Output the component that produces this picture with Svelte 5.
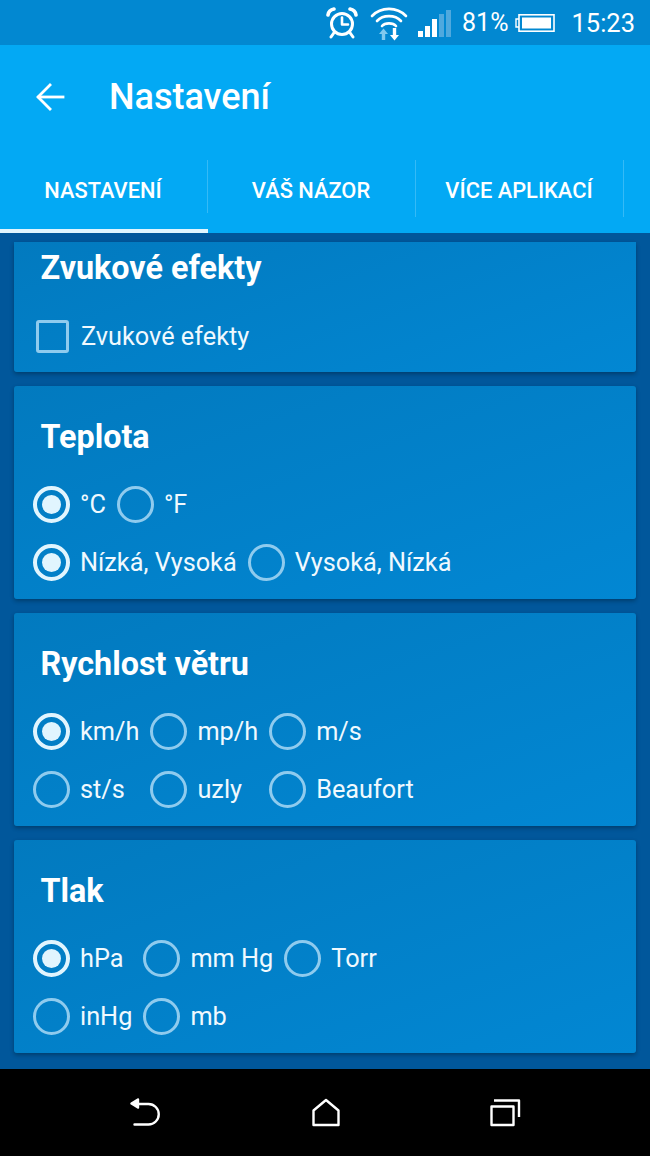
<script>
    const tabs = [
        { label: 'NASTAVENÍ', active: true },
        { label: 'VÁŠ NÁZOR', active: false },
        { label: 'VÍCE APLIKACÍ', active: false }
    ];

    const cards = [
        {
            title: 'Teplota',
            rows: [
                ['°C', '°F'],
                ['Nízká, Vysoká', 'Vysoká, Nízká']
            ]
        },
        {
            title: 'Rychlost větru',
            grid: ['km/h', 'mp/h', 'm/s', 'st/s', 'uzly', 'Beaufort']
        },
        {
            title: 'Tlak',
            grid: ['hPa', 'mm Hg', 'Torr', 'inHg', 'mb']
        }
    ];

    const selected = ['°C', 'Nízká, Vysoká', 'km/h', 'hPa'];
</script>

<div class="screen">
    <header class="status">
        <!-- Alarm -->
        <svg class="alarm" width="32" height="32" viewBox="0 0 32 32" fill="none" stroke="#fff" stroke-width="3" stroke-linecap="round" stroke-linejoin="round"><circle cx="16" cy="17" r="10.5"/><path d="M16 10.500V17.500H22" stroke-width="2.600"/><path d="M2 8C2.500 4.500 5 2.500 8 2" stroke-width="3.600"/><path d="M30 8C29.500 4.500 27 2.500 24 2" stroke-width="3.600"/><path d="M8.500 25 5 30M23.500 25 27 30"/></svg>
        <!-- Wifi with transfer arrows -->
        <svg class="wifi" width="38" height="36" viewBox="0 0 38 36" fill="none" stroke="#fff" stroke-width="2.600" stroke-linecap="round"><path d="M2 11C11 1.500 27 1.500 36 11"/><path d="M7 16C13 9.500 25 9.500 31 16"/><path d="M12 21C15 17.500 23 17.500 26 21"/><path d="M13.500 35V28" stroke="#81c9ee" stroke-width="3.400" stroke-linecap="butt"/><path d="M9 29 13.500 23.500 18 29Z" fill="#81c9ee" stroke="none"/><path d="M24.500 23V31" stroke-width="3.400" stroke-linecap="butt"/><path d="M20 30 24.500 35.500 29 30Z" fill="#fff" stroke="none"/></svg>
        <!-- Signal -->
        <svg class="signal" width="34" height="27" viewBox="0 0 34 27"><rect x="0" y="21" width="5" height="6" fill="#fff"/><rect x="7" y="16" width="5" height="11" fill="#fff"/><rect x="14" y="9" width="5" height="18" fill="#fff"/><rect x="21" y="4" width="5" height="23" fill="#4fa9de"/><rect x="28" y="0" width="5" height="27" fill="#4fa9de"/></svg>
        <span class="pct">81%</span>
        <!-- Battery -->
        <svg class="battery" width="40" height="18" viewBox="0 0 40 18" fill="none"><rect x="4" y="0.800" width="35" height="16.400" stroke="#fff" stroke-width="1.600"/><path d="M4 5H1V13H4" stroke="#fff" stroke-width="1.400"/><rect x="7" y="3.500" width="29" height="11" fill="#fff"/></svg>
        <span class="time">15:23</span>
    </header>

    <div class="appbar">
        <div class="titlebar">
            <svg class="back" width="30" height="30" viewBox="0 0 30 30" fill="none" stroke="#fff" stroke-width="2.800" stroke-linecap="square"><path d="M4 15H28"/><path d="M15 3 3 15 15 27"/></svg>
            <h1>Nastavení</h1>
        </div>
        <nav class="tabs">
            {#each tabs as tab}
                <div class="tab" class:active={tab.active}><span>{tab.label}</span></div>
            {/each}
        </nav>
    </div>

    <main class="content">
        <section class="card first">
            <h2 class="clipped">Zvukové efekty</h2>
            <label class="check">
                <span class="box"></span>
                <span class="text">Zvukové efekty</span>
            </label>
        </section>

        {#each cards as card}
            <section class="card">
                <h2>{card.title}</h2>
                {#if card.rows}
                    {#each card.rows as row}
                        <div class="row">
                            {#each row as item}
                                <div class="option">
                                    <span class="radio" class:on={selected.includes(item)}></span>
                                    <span class="text">{item}</span>
                                </div>
                            {/each}
                        </div>
                    {/each}
                {:else}
                    <div class="grid">
                        {#each card.grid as item}
                            <div class="option">
                                <span class="radio" class:on={selected.includes(item)}></span>
                                <span class="text">{item}</span>
                            </div>
                        {/each}
                    </div>
                {/if}
            </section>
        {/each}
    </main>

    <footer class="nav">
        <svg width="31" height="29" viewBox="0 0 31 29" fill="none" stroke="#fff" stroke-width="2.400" stroke-linecap="round" stroke-linejoin="round"><path d="M8 6H18.500A10.250 10.250 0 0 1 18.500 26.500H4.500"/><path d="M8 1.500 1.500 5.500 8 9.500Z" fill="#fff"/></svg>
        <svg width="28" height="29" viewBox="0 0 28 29" fill="none" stroke="#fff" stroke-width="2.400" stroke-linejoin="round"><path d="M14 2 26.500 12.500V27H1.500V12.500Z"/></svg>
        <svg width="31" height="29" viewBox="0 0 31 29" fill="none" stroke="#fff" stroke-width="2.400" stroke-linejoin="round"><rect x="1.500" y="8.500" width="22" height="18.500"/><path d="M4 2.500H29V19"/></svg>
    </footer>
</div>

<style>
    :global(body) {
        margin: 0;
        background: #000;
    }

    .screen {
        width: 650px;
        height: 1156px;
        display: flex;
        flex-direction: column;
        font-family: Roboto, "Noto Sans", sans-serif;
        color: #fff;
        overflow: hidden;
    }

    .status {
        height: 45px;
        flex-shrink: 0;
        box-sizing: border-box;
        background: #0288d1;
        display: flex;
        align-items: center;
        justify-content: flex-end;
        padding-right: 15px;
    }

    .alarm { margin-right: 12px; }
    .wifi { margin-right: 10px; }
    .signal { margin-right: 10px; margin-top: 2px; }
    .battery { margin: 0 16px 0 7px; }

    .pct {
        font-size: 25px;
    }

    .time {
        font-size: 25.5px;
    }

    .appbar {
        height: 188px;
        flex-shrink: 0;
        background: #03a9f4;
        display: flex;
        flex-direction: column;
    }

    .titlebar {
        display: flex;
        align-items: center;
        height: 104px;
        padding-left: 35px;
        flex-shrink: 0;
    }

    .back { margin-right: 44px; }

    h1 {
        margin: 0;
        font-size: 36px;
        font-weight: 500;
    }

    .tabs {
        display: flex;
        flex: 1;
        padding-right: 26px;
    }

    .tab {
        width: 208px;
        box-sizing: border-box;
        display: flex;
        align-items: center;
        justify-content: center;
        position: relative;
        font-size: 21.85px;
        font-weight: 500;
        padding: 0 2px 2px 0;
    }

    .tab::after {
        content: "";
        position: absolute;
        right: 0;
        top: 11px;
        bottom: 16px;
        width: 1px;
        background: rgba(255, 255, 255, 0.2);
    }

    .tab.active {
        border-bottom: 4px solid #e1f5fe;
        padding-bottom: 0;
        padding-top: 2px;
    }

    .content {
        height: 836px;
        flex-shrink: 0;
        box-sizing: border-box;
        background: #01579b;
        padding: 9px 14px 0;
        display: flex;
        flex-direction: column;
        gap: 14px;
        overflow: hidden;
    }

    .card {
        height: 213px;
        flex-shrink: 0;
        box-sizing: border-box;
        border-radius: 3px;
        background: linear-gradient(160deg, #027abf, #0287d3);
        box-shadow: 0 2px 4px rgba(0, 0, 0, 0.3);
        padding: 31px 0 0 19px;
    }

    .card.first {
        height: 130px;
        padding-top: 0;
        border-radius: 0 0 3px 3px;
    }

    h2 {
        margin: 0 0 18px 7.5px;
        font-size: 32.3px;
        line-height: 40px;
        font-weight: 700;
    }

    h2.clipped {
        margin-bottom: 32px;
        margin-top: 6px;
    }

    .check {
        display: flex;
        align-items: center;
        gap: 12px;
        margin-left: 3px;
    }

    .box {
        width: 33px;
        height: 33px;
        box-sizing: border-box;
        border: 3.5px solid #8fcbee;
        border-radius: 3px;
    }

    .row {
        display: flex;
        gap: 11px;
        height: 58px;
        align-items: center;
    }

    .grid {
        display: grid;
        grid-template-columns: auto auto auto;
        justify-content: start;
        column-gap: 11px;
        grid-auto-rows: 58px;
        align-items: center;
    }

    .option {
        display: flex;
        align-items: center;
        gap: 10px;
    }

    .text {
        font-size: 25.3px;
        color: #f0f9fe;
    }

    .radio {
        width: 37px;
        height: 37px;
        box-sizing: border-box;
        border: 3px solid #8fcbee;
        border-radius: 50%;
        flex-shrink: 0;
        position: relative;
    }

    .radio.on {
        border-color: #e1f5fe;
        border-width: 4px;
    }

    .radio.on::after {
        content: "";
        position: absolute;
        inset: 5px;
        border-radius: 50%;
        background: #e1f5fe;
    }

    .nav {
        flex: 1;
        background: #000;
        display: flex;
        align-items: center;
        padding: 0 129px 0 130px;
        justify-content: space-between;
    }
</style>
